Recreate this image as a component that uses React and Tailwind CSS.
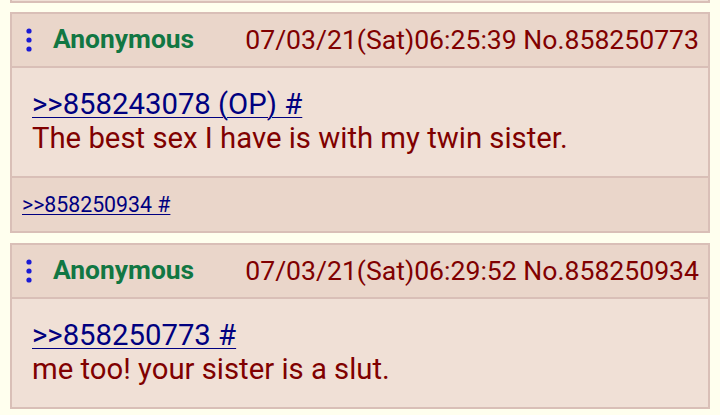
export default function App() {
  const Dots = () => (
    <svg width="6" height="24" viewBox="0 0 6 24" className="shrink-0">
      <circle cx="3" cy="3" r="2.6" fill="#1a1ad6" />
      <circle cx="3" cy="12" r="2.6" fill="#1a1ad6" />
      <circle cx="3" cy="21" r="2.6" fill="#1a1ad6" />
    </svg>
  );
  const Card = ({ date, no, link, text, footer, last }) => (
    <div className={`mx-[10px] border-2 border-[#d9bfb7] bg-[#f0e0d6] ${last ? "" : "mb-[10px]"}`}>
      <div className="flex h-[54px] items-center justify-between border-b-2 border-[#d9bfb7] bg-[#ead6ca] pl-[14px] pr-[9px]">
        <div className="flex items-center gap-[21px]">
          <Dots />
          <span className="text-[26.4px] font-bold text-[#117743]">Anonymous</span>
        </div>
        <span className="text-[26.6px] text-[#800000]">
          {date} No.{no}
        </span>
      </div>
      <div className="px-[20px] pt-[19px] pb-[21px] text-[29.3px] leading-[34px]">
        <div>
          <a className="text-[#000080] underline decoration-1 underline-offset-[3px]">{link}</a>
        </div>
        <div className="text-[#800000]">{text}</div>
      </div>
      {footer && (
        <div className="flex h-[55px] items-center border-t-2 border-[#d9bfb7] bg-[#ead6ca] px-[10px]">
          <a className="text-[21.3px] text-[#000080] underline decoration-1 underline-offset-[2px]">{footer}</a>
        </div>
      )}
    </div>
  );
  return (
    <div className="h-[415px] w-[720px] overflow-hidden bg-[#ffffee]" style={{ fontFamily: "Roboto, 'Noto Sans', sans-serif" }}>
      <div className="mx-[10px] mb-[9px] h-[3px] border-x-2 border-b-2 border-[#d9bfb7] bg-[#f0e0d6]" />
      <Card
        date="07/03/21(Sat)06:25:39"
        no="858250773"
        link=">>858243078 (OP) #"
        text="The best sex I have is with my twin sister."
        footer=">>858250934 #"
      />
      <Card
        date="07/03/21(Sat)06:29:52"
        no="858250934"
        link=">>858250773 #"
        text="me too! your sister is a slut."
        last
      />
    </div>
  );
}
